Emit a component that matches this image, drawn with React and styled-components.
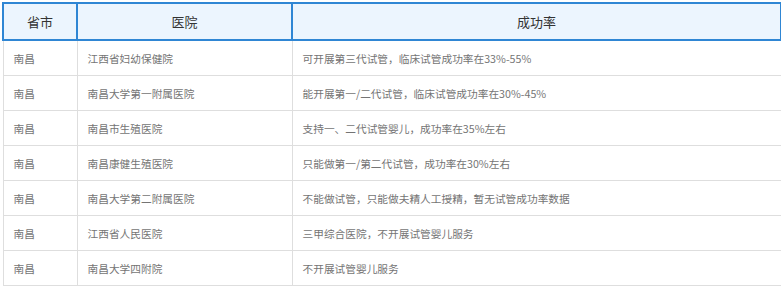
import React from 'react';
import styled, { createGlobalStyle } from 'styled-components';

const GlobalStyle = createGlobalStyle`
  body {
    margin: 0;
    background: #fff;
    font-family: "Microsoft YaHei", "Noto Sans CJK SC", sans-serif;
  }
`;

const Wrapper = styled.div`
  padding: 2px 4px 0 2px;
`;

const Table = styled.table`
  width: 772px;
  border-collapse: collapse;
  table-layout: fixed;
`;

const HeadCell = styled.th`
  height: 35px;
  padding: 0;
  background: #ecf5fe;
  border: 2px solid #2f86d4;
  color: #333;
  font-size: 13px;
  font-weight: normal;
  text-align: center;
  width: ${p => p.width}px;
`;

const Cell = styled.td`
  height: 34px;
  padding: 0 0 0 10px;
  border: 1px solid #dedede;
  color: #747474;
  font-size: 10.7px;
  text-align: left;
  white-space: nowrap;
`;

const rows = [
  ['南昌', '江西省妇幼保健院', '可开展第三代试管，临床试管成功率在33%-55%'],
  ['南昌', '南昌大学第一附属医院', '能开展第一/二代试管，临床试管成功率在30%-45%'],
  ['南昌', '南昌市生殖医院', '支持一、二代试管婴儿，成功率在35%左右'],
  ['南昌', '南昌康健生殖医院', '只能做第一/第二代试管，成功率在30%左右'],
  ['南昌', '南昌大学第二附属医院', '不能做试管，只能做夫精人工授精，暂无试管成功率数据'],
  ['南昌', '江西省人民医院', '三甲综合医院，不开展试管婴儿服务'],
  ['南昌', '南昌大学四附院', '不开展试管婴儿服务'],
];

export default function App() {
  return (
    <Wrapper>
      <GlobalStyle />
      <Table>
        <thead>
          <tr>
            <HeadCell width={72}>省市</HeadCell>
            <HeadCell width={213}>医院</HeadCell>
            <HeadCell width={487}>成功率</HeadCell>
          </tr>
        </thead>
        <tbody>
          {rows.map((r, i) => (
            <tr key={i}>
              {r.map((c, j) => (
                <Cell key={j}>{c}</Cell>
              ))}
            </tr>
          ))}
        </tbody>
      </Table>
    </Wrapper>
  );
}
